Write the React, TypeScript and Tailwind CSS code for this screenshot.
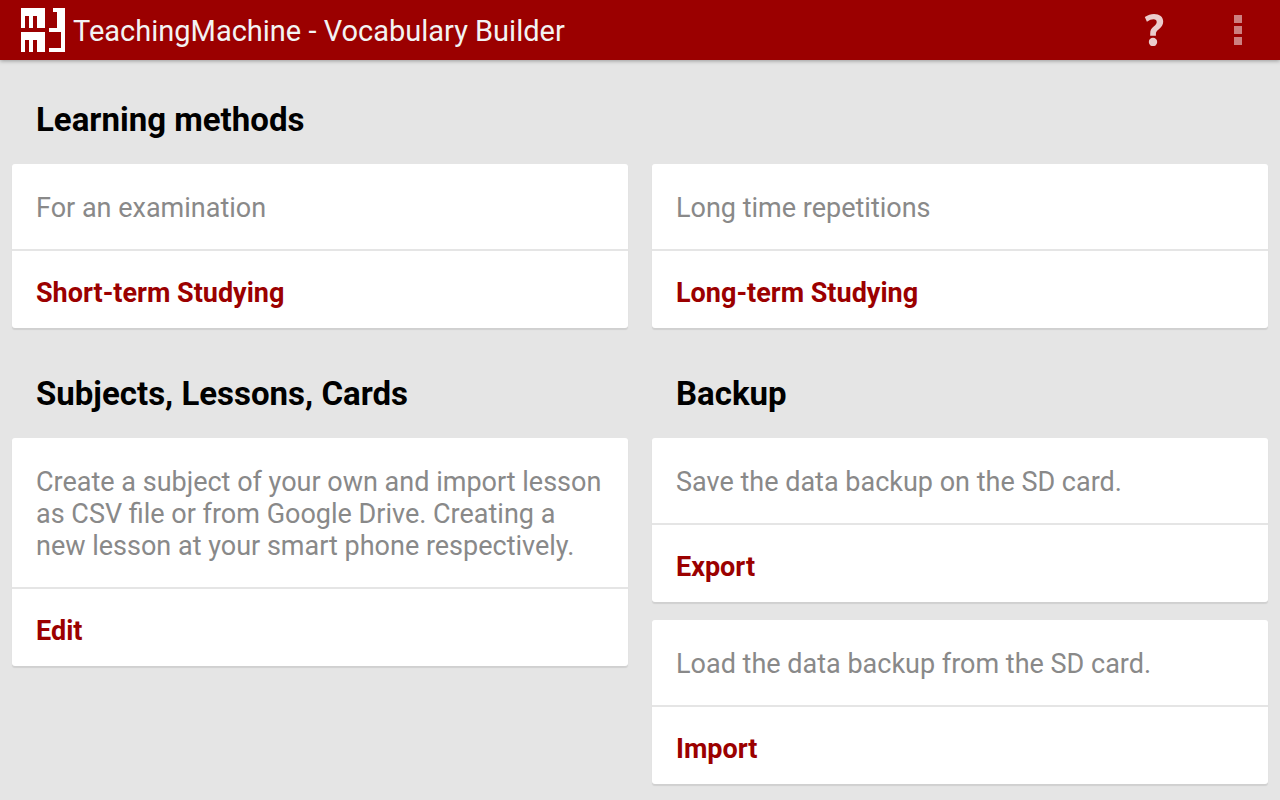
interface CardProps {
  description: string;
  action: string;
}

const Logo = () => (
  <svg
    className="h-11 w-11 shrink-0"
    viewBox="0 0 11 11"
    fill="#fff"
    shapeRendering="crispEdges"
    aria-hidden="true"
  >
    <path d="M0 0h6v5H4V2H3v3H2V2H1v3H0z" />
    <path d="M0 6h6v5H4V8H3v3H2V8H1v3H0z" />
    <path d="M8 0h3v11H7v-1h3V6H7V5h2V1H8z" />
  </svg>
);

const OverflowIcon = () => (
  <svg className="h-[30px] w-2" viewBox="0 0 8 30" fill="#cd8080" aria-hidden="true">
    <path d="M0 0h8v8H0zM0 11h8v8H0zM0 22h8v8H0z" />
  </svg>
);

const HelpIcon = () => (
  <svg className="h-8 w-5" viewBox="0 0 20 32" fill="#ebcccc" aria-hidden="true">
    <path d="M.8 3C4 .9 6.800 0 10 0c5.600 0 9.200 2.800 9.200 7.600 0 3.500-1.600 5.500-4.300 7.600-2.500 2-3 2.800-3 4.800v1.700H6.200v-2.200c0-3.200 1-4.800 3.500-7 2.400-2.100 3-2.900 3-4.500 0-1.800-1.100-2.700-3.200-2.700-2.100 0-4.100.8-6.600 2.500z" />
    <circle cx="9" cy="28" r="4.200" />
  </svg>
);

const Card = ({ description, action }: CardProps) => {
  return (
    <div className="overflow-hidden rounded-[3px] bg-white shadow-[0_2px_1px_#d0d0d0]">
      <p className="px-6 pt-7 pb-[25px] text-[27px] leading-8 text-[#898989]">
        {description}
      </p>
      <button
        type="button"
        className="block w-full cursor-pointer border-t-2 border-[#e5e5e5] px-6 pt-[26px] pb-[19px] text-left text-[27px] leading-8 font-bold text-[#9b0000]"
      >
        {action}
      </button>
    </div>
  );
};

const Heading = ({ title }: { title: string }) => (
  <h2 className="px-6 pt-7 pb-6 text-[33px] leading-10 font-bold text-black">
    {title}
  </h2>
);

const App = () => {
  return (
    <div className="min-h-screen bg-[#e5e5e5] font-['Roboto',sans-serif]">
      <header className="flex h-[60px] items-center bg-[#9b0000] pl-[21px] shadow-[0_1px_4px_#999]">
        <Logo />
        <h1 className="ml-2 pt-0.5 text-[29px] leading-9 text-[#f3f3f3]">
          TeachingMachine - Vocabulary Builder
        </h1>
        <div className="ml-auto flex h-full">
          <button
            type="button"
            aria-label="Help"
            className="flex w-[84px] cursor-pointer items-center justify-center"
          >
            <HelpIcon />
          </button>
          <button
            type="button"
            aria-label="More options"
            className="flex w-[84px] cursor-pointer items-center justify-center"
          >
            <OverflowIcon />
          </button>
        </div>
      </header>

      <main className="flex flex-col gap-[18px] p-3">
        <section>
          <Heading title="Learning methods" />
          <div className="grid grid-cols-2 gap-6">
            <Card description="For an examination" action="Short-term Studying" />
            <Card description="Long time repetitions" action="Long-term Studying" />
          </div>
        </section>

        <div className="grid grid-cols-2 items-start gap-6">
          <section>
            <Heading title="Subjects, Lessons, Cards" />
            <Card
              description="Create a subject of your own and import lesson as CSV file or from Google Drive. Creating a new lesson at your smart phone respectively."
              action="Edit"
            />
          </section>
          <section>
            <Heading title="Backup" />
            <div className="flex flex-col gap-[18px]">
              <Card description="Save the data backup on the SD card." action="Export" />
              <Card description="Load the data backup from the SD card." action="Import" />
            </div>
          </section>
        </div>
      </main>
    </div>
  );
};

export default App;
